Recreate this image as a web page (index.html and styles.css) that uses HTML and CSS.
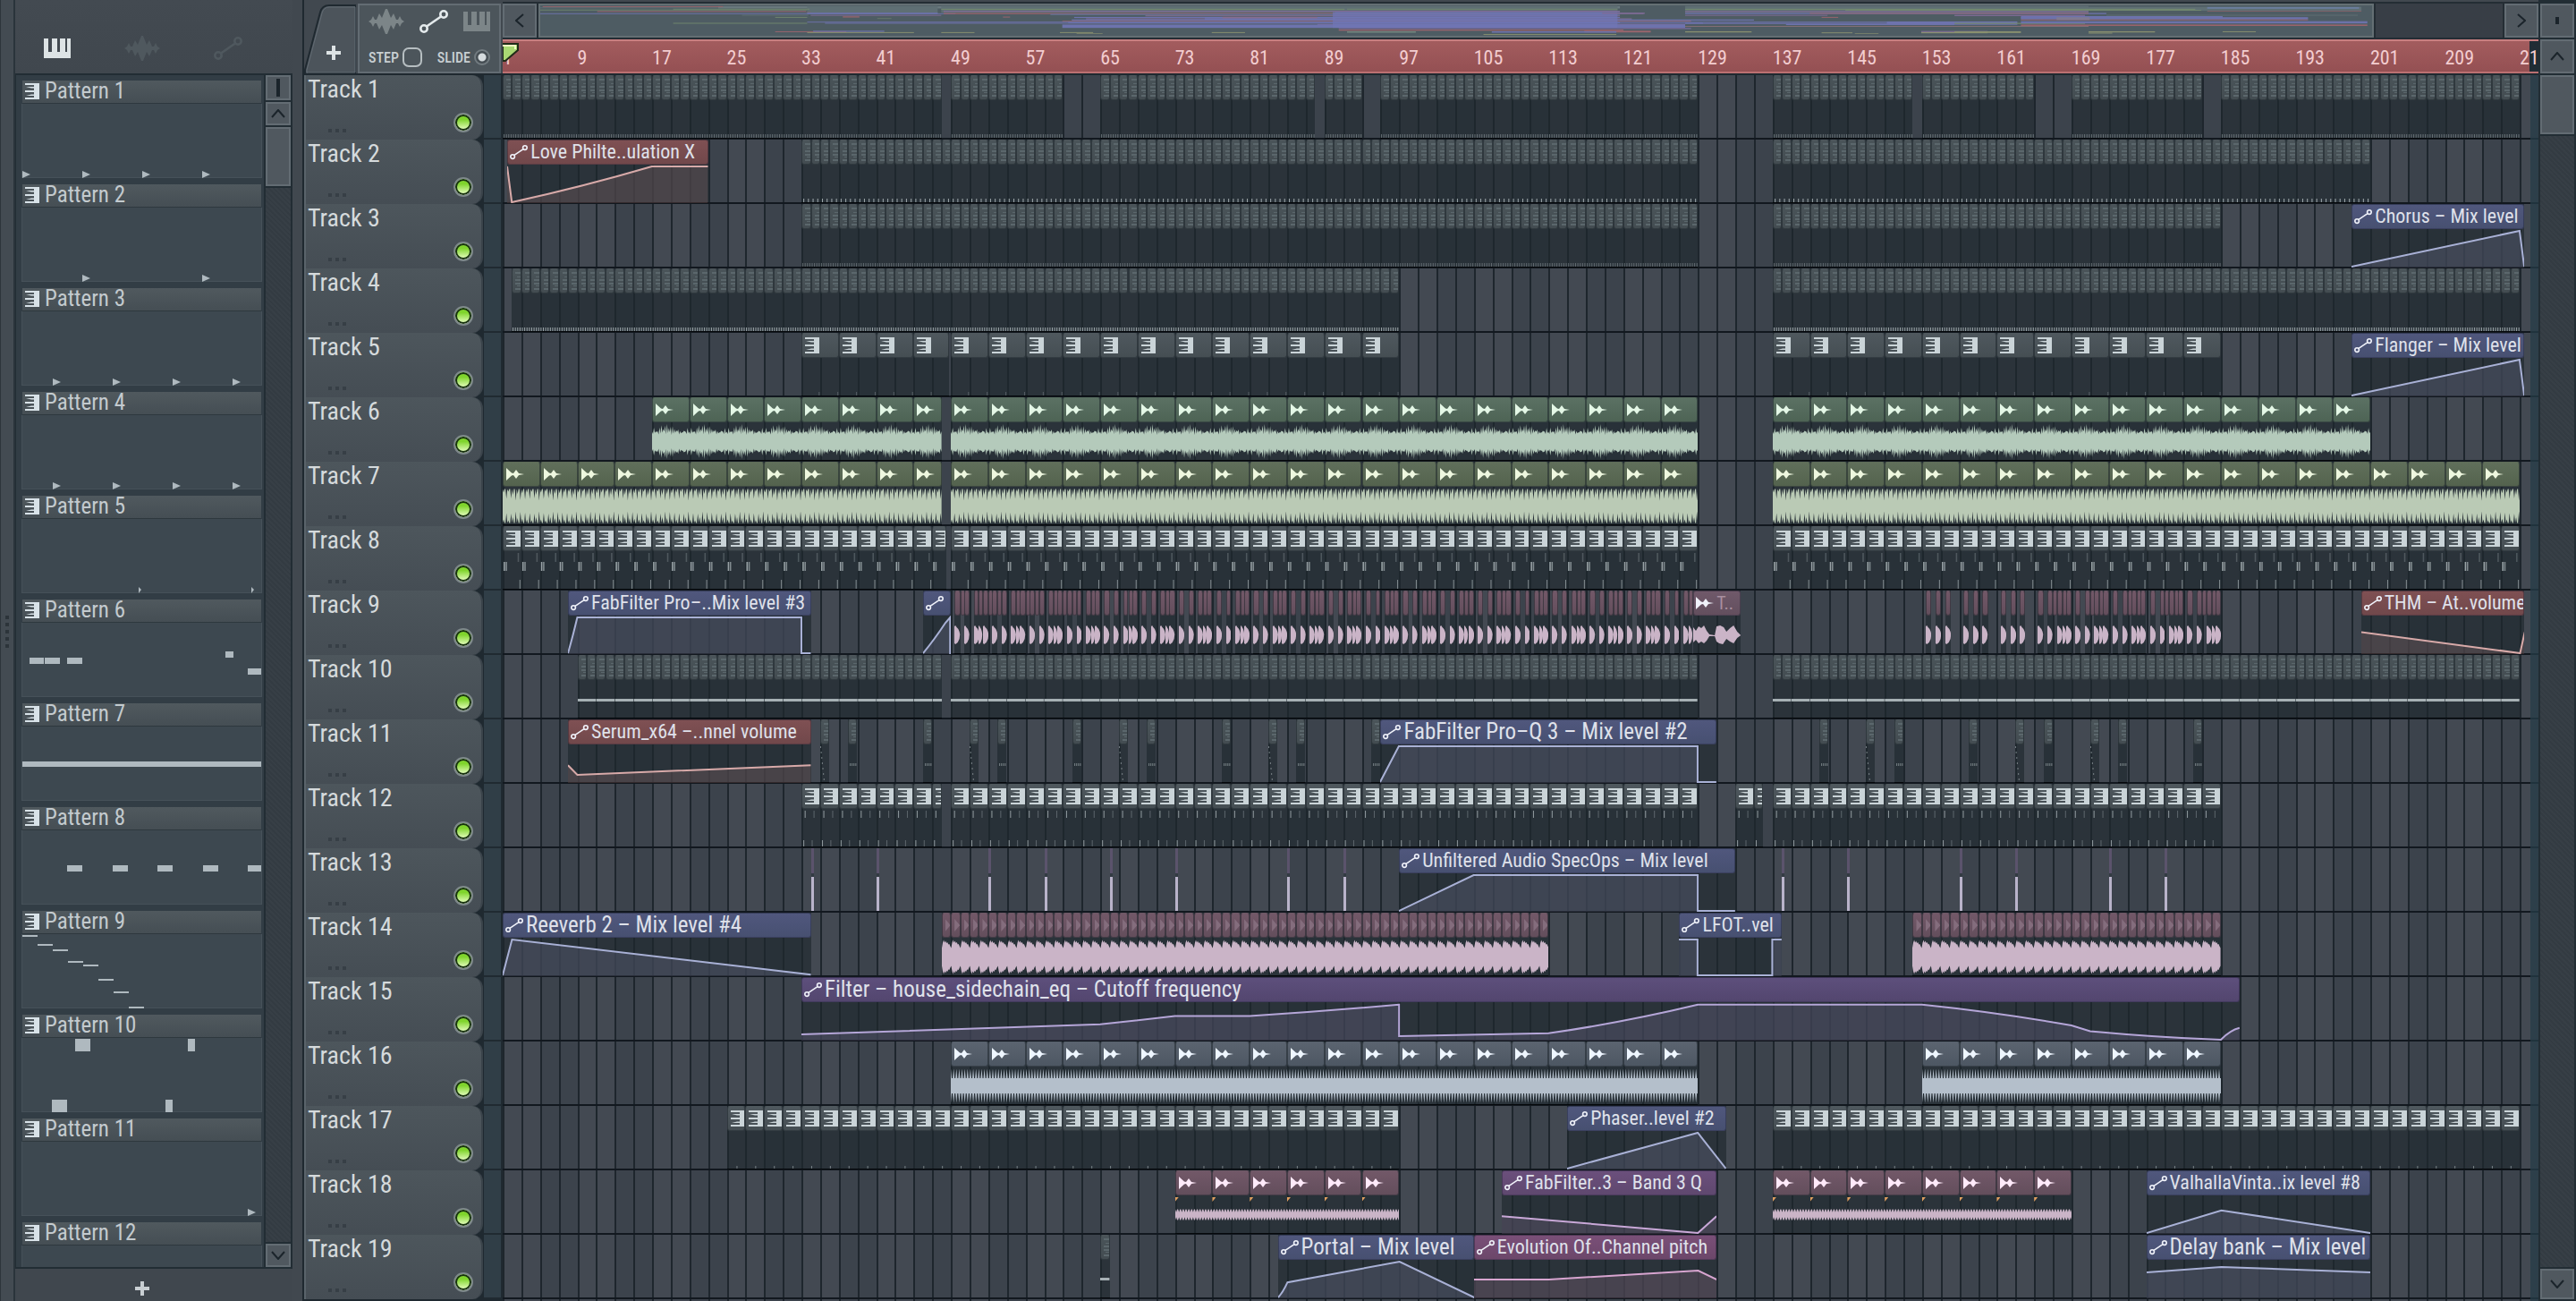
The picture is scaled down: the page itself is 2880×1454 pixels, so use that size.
FILE: index.html
```html
<!DOCTYPE html>
<html lang="en">
<head>
<meta charset="utf-8">
<title>Playlist</title>
<link rel="stylesheet" href="styles.css">
</head>
<body>
<svg class="defs" aria-hidden="true">
  <symbol id="piano" viewBox="0 0 30 22"><path d="M0 0h5v15h4V0h6v15h3V0h6v15h2V0h4v22H0z"/></symbol>
  <symbol id="wave" viewBox="0 0 40 28"><path d="M0 14l3-2 2-4 2 4 2 0 3-7 3 5 2-5 2-5h2l2 5 2 5 3-5 3 7 2 0 2-4 2 4 3 2-3 2-2 4-2-4-2 0-3 7-3-5-2 5-2 5h-2l-2-5-2-5-3 5-3-7-2 0-2 4-2-4z"/></symbol>
  <symbol id="link" viewBox="0 0 32 26"><g fill="none" stroke="currentColor" stroke-width="2.6"><circle cx="5" cy="21" r="3.7"/><circle cx="27" cy="5" r="3.7"/><path d="M8 18.500L24 7.500"/></g></symbol>
  <symbol id="keys" viewBox="0 0 16 18"><path d="M0 0h16v18H0v-2h10v-2H1l6-1.500h3V10H0V8h10V5.500H7L1 4h9V2H0z"/></symbol>
  <symbol id="dimkeys" viewBox="0 0 6 20"><path d="M0 0h6v2H0zM2 5h4v1H2zM0 8h6v2H0zM0 12h6v2H0zM2 15h4v1H2zM0 18h6v2H0z"/></symbol>
  <symbol id="sample" viewBox="0 0 20 14"><path d="M0 0l6 5.500 2 .5 3-4 3 4 6 1-6 1-3 4-3-4-2 .5L0 14z"/></symbol>
  <symbol id="plus" viewBox="0 0 16 16"><path d="M6 0h4v6h6v4h-6v6H6v-6H0V6h6z"/></symbol>
  <symbol id="chevron" viewBox="0 0 16 10"><path d="M1 9l7-8 7 8" fill="none" stroke="currentColor" stroke-width="2"/></symbol>
</svg>

<main class="app">
  <div class="handle"><i></i><i></i><i></i><i></i><i></i></div>

  <aside class="browser">
    <nav class="modes">
      <button class="mode on" aria-label="Patterns"><svg width="30" height="22"><use href="#piano"/></svg></button>
      <button class="mode" aria-label="Audio"><svg width="40" height="28"><use href="#wave"/></svg></button>
      <button class="mode" aria-label="Automation"><svg width="32" height="26"><use href="#link"/></svg></button>
    </nav>
    <div class="picker">
      <ul class="patterns" id="patterns"></ul>
      <div class="scroll narrow">
        <button class="btn" aria-label="Collapse"><span class="bar"></span></button>
        <button class="btn" aria-label="Scroll up"><svg width="16" height="10"><use href="#chevron"/></svg></button>
        <div class="thumb"></div>
        <div class="groove"></div>
        <button class="btn" aria-label="Scroll down"><svg class="down" width="16" height="10"><use href="#chevron"/></svg></button>
      </div>
    </div>
    <button class="add" aria-label="Add pattern"><svg width="16" height="16"><use href="#plus"/></svg></button>
  </aside>

  <section class="playlist">
    <div class="corner">
      <button class="tab" aria-label="Add track">
        <svg class="tab-shape" viewBox="0 0 58 80" preserveAspectRatio="none"><path d="M1 80V76L18 10Q20 2 28 2H58V80z" fill="#4c545b" stroke="#1f2930" stroke-width="2"/><path d="M3 80V76L20 11Q22 4 28 4H57V79H3" fill="none" stroke="#636c74" stroke-width="1"/></svg>
        <svg class="tab-plus" width="16" height="16"><use href="#plus"/></svg>
      </button>
      <div class="tools">
        <div class="tool-icons">
          <button class="mode" aria-label="Show audio"><svg width="40" height="28"><use href="#wave"/></svg></button>
          <button class="mode on" aria-label="Show automation"><svg width="32" height="26"><use href="#link"/></svg></button>
          <button class="mode" aria-label="Show patterns"><svg width="30" height="22"><use href="#piano"/></svg></button>
        </div>
        <div class="switches">
          <label>STEP<input type="checkbox" class="step"></label>
          <label>SLIDE<input type="radio" class="slide" checked></label>
        </div>
      </div>
    </div>

    <header class="top">
      <div class="overview">
        <button class="btn" aria-label="Scroll left"><svg class="left" width="16" height="10"><use href="#chevron"/></svg></button>
        <div class="map"><svg id="map" viewBox="0 0 1543 108" preserveAspectRatio="none"></svg></div>
        <div class="map-rest"></div>
        <button class="btn" aria-label="Scroll right"><svg class="right" width="16" height="10"><use href="#chevron"/></svg></button>
      </div>
      <div class="ruler" id="ruler">
        <svg class="playhead" width="19" height="24" viewBox="0 0 19 24"><path d="M0 2h17v7L3 21H0z" fill="#a9d873" stroke="#1f2c18" stroke-width="2"/><path d="M0 4h14v4" fill="none" stroke="#efffc4" stroke-width="2"/></svg>
      </div>
    </header>

    <div class="scroll wide">
      <button class="btn" aria-label="Detach"><span class="dot"></span></button>
      <button class="btn" aria-label="Scroll up"><svg width="16" height="10"><use href="#chevron"/></svg></button>
      <div class="thumb"></div>
      <div class="groove"></div>
      <button class="btn" aria-label="Scroll down"><svg class="down" width="16" height="10"><use href="#chevron"/></svg></button>
    </div>

    <ol class="heads" id="heads"></ol>
    <div class="lanes" id="lanes"></div>
  </section>
</main>
<script src="playlist.js"></script>
</body>
</html>
```
FILE: styles.css
```css
* { box-sizing: border-box; }
html, body { height: 100%; margin: 0; }
body {
  background: #41484f;
  color: #d3d9dc;
  font-family: "Roboto Condensed", "Liberation Sans Narrow", Roboto, sans-serif;
  overflow: hidden;
}
button { appearance: none; border: 0; padding: 0; margin: 0; background: none; color: inherit; font: inherit; }
ul, ol { list-style: none; margin: 0; padding: 0; }
svg { display: block; fill: currentColor; }
.defs { position: absolute; width: 0; height: 0; }
.app { display: flex; height: 100vh; }

/* left edge grip */
.handle {
  width: 17px; flex: none; display: flex; flex-direction: column; align-items: center; justify-content: center; gap: 4px;
  background: #434b52; border-left: 1px solid #2d353b; border-right: 2px solid #2a343b; padding-bottom: 42px;
}
.handle i { width: 4px; height: 4px; background: #2c343a; }

/* pattern browser */
.browser { width: 310px; flex: none; display: flex; flex-direction: column; background: linear-gradient(#434a51, #40474e 82px); }
.modes { height: 82px; display: flex; align-items: center; gap: 60px; padding: 26px 0 0 32px; }
.mode { color: #4f585e; }
.mode.on { color: #dde3e5; }
.picker { flex: 1; min-height: 0; display: flex; border: 2px solid #222d34; border-left-width: 1px; background: #222d34; gap: 2px; }
.patterns { flex: 1; overflow: hidden; background: #323d45; padding: 6px 2px 0 6px; }
.pattern { margin-bottom: 7px; }
.pattern-name {
  display: flex; align-items: center; gap: 6px; height: 26px; margin: 0 1px; padding: 0 0 1px 3px;
  font-size: 25px; font-weight: 400; line-height: 24px; color: #c3cace;
  background: linear-gradient(#50595e, #454e54); border-bottom: 1px solid #2e383e;
}
.pattern-name svg { color: #d8e2e8; }
.preview { height: 83px; background: #3d4850; border: 1px solid #465159; border-top: 0; color: #afb9bf; }

.btn { display: flex; align-items: center; justify-content: center; background: #50585f; border: 2px solid #636c73; color: #1b242b; flex: none; }
.scroll { display: flex; flex-direction: column; gap: 2px; background: #222d34; }
.thumb { height: 66px; background: #50585f; border: 2px solid #636c73; }
.groove { flex: 1; background: repeating-linear-gradient(45deg, #373f46 0 2px, #333b42 2px 4px); }
.narrow { width: 28px; }
.narrow .btn { height: 26px; }
.narrow .btn:first-child { height: 28px; }
.bar { width: 4px; height: 20px; background: #1b242b; }
.dot { width: 4px; height: 8px; background: #1b242b; }
.down { transform: rotate(180deg); }
.left { transform: rotate(-90deg); }
.right { transform: rotate(90deg); }
.add { height: 36px; display: flex; align-items: center; justify-content: center; color: #c9cfd3; padding: 8px 26px 0 0; }

/* playlist frame */
.playlist {
  flex: 1; min-width: 0; display: grid; grid-template: 84px minmax(0, 1fr) / 222px minmax(0, 1fr) 42px;
  padding-left: 13px; background: linear-gradient(90deg, #41484f 0 11px, #1f2930 11px 13px, #1f2930 13px);
}
.corner { display: flex; padding: 4px 2px 2px 0; gap: 2px; background: linear-gradient(#41484f 0 82px, #1f2930 82px); }
.tab { position: relative; width: 58px; }
.tab-shape { width: 100%; height: 100%; }
.tab-plus { position: absolute; left: 25px; top: 47px; color: #dde3e5; }
.tools { flex: 1; background: #4c555b; border: 2px solid #636c73; padding: 2px 10px 0; }
.tool-icons { display: flex; align-items: center; justify-content: space-between; height: 32px; }
.tools .mode { color: #7c8588; }
.tools .mode.on { color: #e4eaec; }
.switches { display: flex; justify-content: space-between; align-items: center; height: 42px; padding-top: 6px; font-size: 16px; font-weight: 500; color: #c8cfd2; }
.switches label { display: flex; align-items: center; gap: 4px; }
.switches input { appearance: none; margin: 0; }
.step { width: 22px; height: 22px; border: 2px solid #b6bec1; border-radius: 7px; }
.slide { width: 18px; height: 18px; border: 2px solid #727b80; border-radius: 50%; background: radial-gradient(circle, #d5dbde 0 4px, #454d53 5px); }

.top { display: flex; flex-direction: column; background: #1f2930; min-width: 0; container-type: inline-size; --bar: calc(100cqw / 218); }
.overview { display: flex; height: 44px; padding: 4px 0 2px; gap: 2px; background: linear-gradient(#41484f 0 2px, #242d34 2px 4px, #242d34 4px); }
.overview .btn { width: 38px; }
.map { flex: 935; background: #4e5c63; border: 2px solid #646f73; padding: 0 1px 0 0; }
.map svg { width: 100%; height: 34px; }
.map-rest { flex: 65; background: #383e46; }
.ruler {
  position: relative; display: flex; height: 38px; overflow: hidden; align-items: center;
  background: linear-gradient(#a35c5e, #945053); border-top: 2px solid #c87f80; border-bottom: 2px solid #bb7072;
  color: #f3cdd0; font-size: 22px; line-height: 36px; padding-top: 3px;
}
.ruler span { flex: none; width: calc(var(--bar) * 8); z-index: 1; }
.ruler::after { content: ""; position: absolute; right: 0; top: -2px; bottom: -2px; width: var(--bar); background: #202c34; }
.playhead { position: absolute; left: 0; top: 1px; z-index: 2; }

.wide { grid-row: 1 / 3; grid-column: 3; padding: 4px 2px 2px; }
.wide .btn { height: 38px; }
.wide .btn:last-child { height: 34px; }

/* track headers */
.heads { grid-row: 2; overflow: hidden; }
.head {
  display: grid; grid-template-columns: 200px 19px; column-gap: 1px; height: 72px;
}
.head::after { content: ""; background: #303e47; border-bottom: 2px solid #202a31; }
.head-box {
  display: flex; flex-direction: column; justify-content: space-between; position: relative;
  padding: 1px 0 8px 2px; border-radius: 0 12px 12px 0; border-left: 2px solid #59636a; border-right: 2px solid #3a434a;
  background: linear-gradient(#4d565c, #454d54);
}
.head-name { font-size: 28px; line-height: 30px; font-weight: 400; color: #d5dadc; }
.dots { display: flex; gap: 4px; padding-left: 23px; }
.dots i { width: 4px; height: 4px; background: #373f46; }
.led {
  position: absolute; right: 9px; bottom: 8px; width: 22px; height: 22px; border-radius: 50%;
  border: 2px solid #7e888b; background: linear-gradient(#7fd42c 30%, #d9f8ac 85%);
  box-shadow: inset 0 0 0 2px #17300f;
}

/* lanes: every clip is placed in bars, one bar is 1/218 of the lane */
.lanes { grid-row: 2; position: relative; overflow: hidden; container-type: inline-size; }
.lane {
  --bar: calc(100cqw / 218);
  position: relative; height: 72px;
  background:
    linear-gradient(transparent 70px, #12181f 70px),
    repeating-linear-gradient(90deg, #1e262d 0 2px, transparent 2px calc(var(--bar) * 2)),
    repeating-linear-gradient(90deg, #434952 0 calc(var(--bar) * 4), #3c434c 0 calc(var(--bar) * 8));
}
.song-end { position: absolute; z-index: 3; inset: 0 0 0 auto; width: 9px; background: rgba(38, 60, 72, .75); }
.clip, .run, .tile {
  position: absolute; top: 0;
  left: calc((var(--s) - 1) * var(--bar)); width: calc(var(--n) * var(--bar));
}
.clip, .run { height: 71px; background: rgba(31, 40, 45, .66); border-bottom: 1px solid #05080b; }
.clip { z-index: 2; }
.clip-name {
  display: flex; align-items: center; gap: 3px; height: 28px; padding-left: 2px; overflow: hidden; white-space: nowrap;
  font-size: 22px; line-height: 26px; color: #dfe1ea; border-radius: 3px;
  background: linear-gradient(var(--a), var(--b)); border: 1px solid rgba(20, 24, 40, .35);
}
.roomy .clip-name { font-size: 25px; }
.clip-name svg { flex: none; width: 20px; height: 18px; color: #f0f2fa; }
.clip-name span { flex: none; }
.clip .curve { position: absolute; left: 0; top: 28px; width: 100%; height: 43px; }
.curve path { vector-effect: non-scaling-stroke; }
.curve .line { fill: none; stroke: var(--l); stroke-width: 2; }
.curve .fill { fill: var(--f); }
.blue { --a: #50577d; --b: #475071; --l: #a9b1d6; --f: rgba(92, 98, 122, .42); }
.red { --a: #7f5053; --b: #71484b; --l: #d8aaa9; --f: rgba(120, 95, 98, .4); }
.purple { --a: #5d4f7c; --b: #53466f; --l: #b5a6d8; --f: rgba(95, 92, 122, .42); }
.violet { --a: #6b4f7c; --b: #5f486f; --l: #c9a8d8; --f: rgba(105, 92, 118, .42); }
.magenta { --a: #7a4f78; --b: #6c476a; --l: #d8a5d0; --f: rgba(115, 92, 112, .42); }
.pink { --a: #70596a; --b: #634f5e; --l: #cab4c7; }

.tile {
  height: 28px; overflow: hidden; border-radius: 3px; padding: 4px 0 0 3px;
  background: linear-gradient(var(--a), var(--b)); border: 1px solid rgba(24, 32, 38, .5); border-top-color: rgba(255, 255, 255, .06);
}
.keys { --a: #4f585e; --b: #454e53; --i: #cad4d8; }
.dim { --a: #4a5459; --b: #434c51; --i: #5b676c; }
.dim .tile { padding: 3px 0 0 3px; }
.green { --a: #5b7163; --b: #4e6455; --i: #e4f7e6; --l: #b4cabb; }
.olive { --a: #606f5b; --b: #54634e; --i: #eef7df; --l: #bacab5; }
.rose { --a: #725868; --b: #634e5c; --i: #ffeafa; --l: #cab4c7; }
.steel { --a: #5b6470; --b: #4d5763; --i: #eef6ff; --l: #b4bfcb; }
.green .tile, .olive .tile, .rose .tile, .steel .tile { padding-top: 6px; }
.tile svg { color: var(--i); }
.wavebox { position: absolute; left: 0; top: 29px; width: 100%; height: 41px; color: var(--l); }
.ticks { position: absolute; left: 0; top: 0; width: 100%; height: 70px; color: #a6b0b4; }
.flag { position: absolute; top: 30px; left: calc((var(--s) - 1) * var(--bar)); width: 4px; height: 5px; background: #e0a060; clip-path: polygon(0 0, 100% 0, 0 100%); }
.faint { font-size: 20px; color: #a88f9f; }
.fade { position: absolute; left: 3px; top: 6px; width: 6px; height: 14px; background: #846d7d; clip-path: polygon(0 0, 100% 50%, 0 100%); }
.hit { position: absolute; top: 0; left: calc((var(--s) - 1) * var(--bar)); width: 3px; height: 70px; background: linear-gradient(#5b536c 28px, #333b43 28px 32px, #b9b3ca 32px); }
```
FILE: playlist.js
```js
const use = (id, w, h) => `<svg width="${w}" height="${h}"><use href="#${id}"/></svg>`;
const place = (s, n) => `style="--s:${s};--n:${n}"`;

/* ---- pattern browser ---- */
const tri = x => `<path d="M${x} 75l9 4-9 4z"/>`;
const box = (x, y, w, h) => `<rect x="${x}" y="${y}" width="${w}" height="${h}"/>`;
const previews = [
  [0, 67, 134, 201].map(tri).join(''),
  [67, 201].map(tri).join(''),
  [34, 101, 168, 235].map(tri).join(''),
  [34, 101, 168, 235].map(tri).join(''),
  [130, 256].map(x => `<path d="M${x} 76l3 3-3 4z"/>`).join(''),
  box(8, 39, 16, 7) + box(25, 39, 17, 7) + box(50, 39, 17, 7) + box(227, 32, 9, 7) + box(252, 51, 17, 7),
  box(0, 39, 269, 6),
  [50, 101, 151, 202, 252].map(x => box(x, 39, 17, 7)).join(''),
  [1, 11, 17, 30, 34, 50, 64, 81].map((y, i) => box(i * 17, y, 17, 2)).join(''),
  box(59, 1, 17, 14) + box(185, 1, 8, 14) + box(33, 69, 17, 14) + box(160, 69, 8, 14),
  tri(252),
  ''
];
document.getElementById('patterns').innerHTML = previews.map((p, i) =>
  `<li class="pattern"><h3 class="pattern-name">${use('keys', 16, 18)}Pattern ${i + 1}</h3><div class="preview"><svg width="100%" height="83">${p}</svg></div></li>`).join('');

/* ---- ruler ---- */
let marks = '';
for (let b = 1; b <= 217; b += 8) marks += `<span>${b}</span>`;
document.getElementById('ruler').insertAdjacentHTML('beforeend', marks);

/* ---- overview map: x, y, width, height, colour ---- */
const G = '#69787d', g = '#71876f', P = '#6d73ad', R = '#9b656d', M = '#7f6b96', Y = '#89906f';
let map = '';
const m = (x, y, w, h, c) => { map += `<rect x="${x}" y="${y}" width="${w}" height="${h}" fill="${c}"/>`; };
[[150, 3, 760, 8, G], [225, 2, 110, 28, '#5f6f74'], [338, 2, 570, 24, '#5f6f74'], [965, 2, 340, 26, '#5f6f74'], [1305, 5, 230, 14, '#5f6f74'],
 [2, 3, 152, 3, R], [0, 8, 150, 2, G], [0, 15, 225, 3, g], [112, 12, 115, 3, g], [338, 12, 340, 4, g], [680, 12, 228, 3, g], [965, 12, 430, 4, g], [1100, 16, 300, 3, g],
 [48, 20, 176, 2, R], [48, 22, 180, 2, '#81646f'], [0, 28, 350, 3, P], [225, 26, 110, 5, P], [340, 19, 570, 4, M], [340, 27, 460, 4, R], [800, 27, 130, 4, M], [670, 23, 240, 5, '#6b6f9c'],
 [170, 34, 56, 2, G], [228, 34, 110, 3, M], [430, 30, 480, 4, '#66749a'], [510, 35, 400, 4, '#7b6b8c'], [450, 41, 460, 4, P], [460, 46, 460, 4, M], [575, 41, 80, 5, R],
 [198, 41, 27, 3, g], [255, 39, 14, 4, R], [284, 46, 12, 2, g], [390, 40, 6, 3, R],
 [448, 50, 575, 4, P], [440, 55, 530, 3, R], [445, 58, 465, 5, P], [225, 58, 755, 3, P], [112, 62, 113, 3, g], [240, 62, 740, 3, P], [655, 66, 310, 4, '#7b6b9c'], [440, 68, 525, 12, P],
 [668, 24, 240, 56, 'rgba(112,118,182,.75)'], [560, 42, 110, 10, 'rgba(112,118,182,.6)'], [673, 80, 297, 4, '#77699c'], [673, 86, 240, 4, R], [880, 90, 56, 6, R],
 [895, 26, 36, 4, M], [965, 20, 340, 4, M], [965, 27, 355, 4, P], [1070, 27, 235, 3, R], [965, 34, 120, 3, M], [980, 58, 240, 3, P], [965, 62, 225, 4, P], [1050, 66, 142, 4, P], [965, 73, 340, 3, '#877077'],
 [1080, 41, 14, 3, R], [1135, 57, 110, 12, P], [1192, 34, 110, 4, M], [1192, 62, 110, 4, g], [1248, 38, 170, 8, P], [1248, 42, 242, 8, P], [1248, 50, 242, 3, R], [1248, 56, 292, 4, P], [1248, 60, 292, 4, P], [1248, 68, 292, 5, R], [1278, 42, 28, 10, '#7f7a91'],
 [1405, 6, 128, 6, '#6b7fa0'], [1405, 20, 130, 2, R], [1320, 34, 212, 2, G],
 [198, 92, 60, 3, R], [230, 90, 60, 4, P], [225, 95, 90, 3, Y], [338, 95, 28, 3, Y], [438, 95, 28, 3, Y], [452, 99, 22, 2, Y], [566, 95, 28, 3, Y], [680, 92, 58, 5, '#70857d'], [795, 102, 112, 3, Y], [802, 92, 105, 5, P],
 [965, 92, 56, 4, Y], [1080, 96, 26, 3, Y], [1108, 99, 20, 2, Y], [1164, 91, 56, 4, M], [1164, 95, 56, 4, Y], [1192, 92, 56, 6, Y], [1305, 92, 56, 4, Y], [1305, 97, 20, 3, Y], [1418, 92, 28, 3, Y]
].forEach(a => m(...a));
document.getElementById('map').innerHTML = map;

/* ---- lanes ---- */
const H = 43;
function curve(n, d) {
  // d: list of [bar, level] points, a third entry bends the segment that leads to the point
  const px = b => b * 10, py = v => 2 + (1 - v) * 40;
  let s = '', prev;
  d.forEach(([b, v, bend], i) => {
    if (!i) s = `M${px(b)} ${py(v)}`;
    else if (bend) s += `Q${(px(prev[0]) + px(b)) / 2} ${(py(prev[1]) + py(v)) / 2 + bend} ${px(b)} ${py(v)}`;
    else s += `L${px(b)} ${py(v)}`;
    prev = [b, v];
  });
  return `<svg class="curve" viewBox="0 0 ${n * 10} ${H}" preserveAspectRatio="none"><path class="fill" d="${s}L${n * 10} ${H}L0 ${H}z"/><path class="line" d="${s}"/></svg>`;
}
const clip = (s, e, cls, name, d) =>
  `<div class="clip ${cls}" ${place(s, e - s)}><div class="clip-name">${use('link', 20, 18)}<span>${name}</span></div>${curve(e - s, d)}</div>`;

const rnd = seed => () => (seed = (seed * 16807) % 2147483647) / 2147483647;
// amplitude functions: position inside the loop (0..1), random source, step index; returns 0..1
const shapes = {
  green: { per: 4, amp: (t, r, i) => { const v = r(); return i % 2 ? .38 + .2 * v : .5 + .25 * Math.exp(-Math.pow((t - .42) * 5, 2)) + .3 * v * (i % 3 ? 1 : .3); } },
  olive: { per: 4, amp: (t, r, i) => i % 5 === 4 ? .3 + r() * .15 : i % 5 === 1 ? .6 + .2 * r() : .95 },
  rose14: { per: 1, amp: (t, r) => [.5, .8, .95, .8, .9, .78, .82, .7, .72, .6][Math.round(t * 10)] || .5 },
  steel: { per: 3, amp: (t, r, i) => i % 3 ? .42 : .95 },
  rose18: { per: 3, amp: (t, r, i) => i % 3 === 1 ? .14 : .3 }
};
function wave(n, kind, seed) {
  const k = shapes[kind], up = [], dn = [], per = k.per * 10;
  for (let x = 0; x <= n * 10; x++) {
    const i = Math.round(x % per), r = rnd(seed + i * 7919 + 13);
    r(); r();
    const a = Math.min(.97, k.amp(i / per, r, i));
    up.push(`${x} ${(20.5 - a * 20).toFixed(1)}`); dn.unshift(`${x} ${(20.5 + a * 20).toFixed(1)}`);
  }
  return `<svg class="wavebox" viewBox="0 0 ${n * 10} 41" preserveAspectRatio="none"><path d="M${up.join('L')}L${dn.join('L')}z"/></svg>`;
}
// ticks: per = loop length in bars, list of [offset, y, height, opacity, width]
function ticks(n, per, list) {
  let s = '';
  for (let b = 0; b < n; b += per) for (const [o, y, h, op, w = 1.5] of list)
    if (b + o < n) s += `<rect x="${((b + o) * 10).toFixed(1)}" y="${y}" width="${w}" height="${h}" opacity="${op}"/>`;
  return `<svg class="ticks" viewBox="0 0 ${n * 10} 70" preserveAspectRatio="none">${s}</svg>`;
}
const icons = { keys: use('keys', 16, 18), dim: use('dimkeys', 6, 20), sample: use('sample', 20, 14), fade: '<i class="fade"></i>' };
function run(s, e, size, cls, icon, extra) {
  const n = e - s;
  let t = '';
  for (let b = 0; b < n; b += size) t += `<div class="tile" ${place(b + 1, Math.min(size, n - b))}>${icons[icon] || ''}</div>`;
  return `<div class="run ${cls}" ${place(s, n)}>${t}${extra ? extra(n) : ''}</div>`;
}
const runs = (segs, ...a) => segs.map(([s, e]) => run(s, e, ...a)).join('');

function chops(s, offs) {
  return offs.map(([o, w]) => run(s + o, s + o + w, w, 'rose', '', n =>
    `<svg class="wavebox" viewBox="0 0 10 41" preserveAspectRatio="none"><path d="M0 11L2 10 4 12 7 14 9 17 10 20 9 25 6 29 4 30 2 31 0 30z"/></svg>`)).join('');
}
const full = [[.4, .6], [1.45, .55], [2.43, .57], [3, .4], [3.4, .6]];
const part = [[.4, .6], [1.45, .6], [2.45, .6]];
let vocals = '';
for (let b = 49; b < 125; b += 4) vocals += chops(b, full);
vocals += chops(125, full.slice(0, 4));
for (const b of [153, 157, 161]) vocals += chops(b, part);
for (let b = 165; b < 185; b += 4) vocals += chops(b, full);
const vocalEnd = `<div class="clip pink" ${place(128.5, 5.1)}><div class="clip-name">${use('sample', 20, 14)}<span class="faint">T..</span></div>
  <svg class="wavebox" viewBox="0 0 53 41" preserveAspectRatio="none"><path d="M0 12L3 16 6 11 9 13 12 10 15 16 18 20 24 21 26 11 30 10 34 12 37 17 41 13 45 10 49 17 53 21 49 24 45 30 41 28 37 25 33 31 29 30 26 28 24 22 18 22 15 27 12 30 9 28 6 30 3 26 0 29z"/></svg></div>`;

const dimTile = (segs, t) => runs(segs, 1, 'dim', 'dim', t);
const quarter = op => n => ticks(n, .5, [[.1, 66, 4, op, 1], [.35, 66, 4, op, 1]]);
const small = list => list.map(b => run(b, b + .95, 1, 'dim', 'dim', n => ticks(n, 1, [.2, .4, .6, .8].map(o => [o, 49, 3, .6, 1])))).join('');
const steps = list => list.map(b => run(b, b + .95, 1, 'dim', 'dim', n => ticks(n, 1, [0, 1, 2, 3, 4, 5, 6].map(i => [i * .06, 30 + i * 6, 2, .6, 1])))).join('');
const flags = n => { let s = ''; for (let b = 0; b < n; b += 4) s += `<i class="flag" style="--s:${b + 1}"></i>`; return s; };
const rise = [[0, 0], [18, 1], [18.5, 0]];

const tracks = [
  dimTile([[1, 48], [49, 61], [65, 88], [89, 93], [95, 129], [137, 152], [153, 165], [169, 183], [185, 217]], quarter(.5)),
  clip(1.5, 23, 'red', 'Love Philte..ulation X', [[0, 1], [.5, 0], [15.5, 1, 3], [21.5, 1]]) + dimTile([[33, 129], [137, 201]], n => ticks(n, .5, [[.2, 66, 4, .9, 1]])),
  dimTile([[33, 129], [137, 185]], quarter(.45)) + clip(199, 217.5, 'blue', 'Chorus – Mix level', rise),
  dimTile([[2, 97], [137, 217]], quarter(.9)),
  runs([[33, 48.8], [49, 97], [137, 185]], 4, 'keys', 'keys', n => ticks(n, 2, [[1.85, 66, 4, .35, 1]])) + clip(199, 217.5, 'blue', 'Flanger – Mix level', rise),
  runs([[17, 48], [49, 129], [137, 201]], 4, 'green', 'sample', n => wave(n, 'green', 5)),
  runs([[1, 48], [49, 129], [137, 217]], 4, 'olive', 'sample', n => wave(n, 'olive', 11)),
  runs([[1, 48.5], [49, 129], [137, 217]], 2, 'keys', 'keys', n => ticks(n, 2, [[.1, 40, 10, .9], [.32, 40, 10, .7], [1.6, 30, 10, .3], [1.8, 60, 10, .7, 1]])),
  clip(8, 34, 'blue', 'FabFilter Pro–..Mix level #3', [[0, 0], [1, 1, 2], [25, 1], [25, 0], [26, 0]]) +
    clip(46, 49, 'blue', '', [[0, 0], [2.4, .85, 2], [2.9, 1], [2.9, 0], [3, 0]]) + vocals + vocalEnd +
    clip(200, 217.5, 'red', 'THM – At..volume', [[0, .59], [17, 0], [17.5, .59]]),
  dimTile([[9, 48], [49, 129], [137, 217]], n => ticks(n, 2, [[0, 49, 3, 1, 19.5]])),
  clip(8, 34, 'red', 'Serum_x64 –..nnel volume', [[0, .47], [1, .2], [26, .47]]) +
    steps([35, 51, 67, 83, 147, 163, 171]) + small([38, 46, 54, 62, 70, 78, 86, 94, 142, 150, 158, 166, 174, 182]) +
    clip(95, 131, 'blue roomy', 'FabFilter Pro–Q 3 – Mix level #2', [[0, 0], [2, 1], [34, 1], [34, 0], [36, 0]]),
  runs([[33, 48], [49, 129], [133, 136], [137, 185]], 2, 'keys', 'keys', n => ticks(n, 2, [[.35, 30, 8, .8, 1], [1.3, 30, 8, .4, 1], [.2, 63, 7, .8, 1], [1.1, 63, 7, .4, 1]])),
  [34, 41, 53, 59, 66, 73, 85, 91, 138, 145, 157, 163, 173, 179].map(b => `<i class="hit" style="--s:${b}"></i>`).join('') +
    clip(97, 133, 'blue', 'Unfiltered Audio SpecOps – Mix level', [[0, 0], [8, 1], [32, 1], [32, 0], [36, 0]]),
  clip(1, 34, 'blue roomy', 'Reeverb 2 – Mix level #4', [[0, 0], [1, 1], [33, .02]]) +
    runs([[48, 113], [152, 185]], 1, 'rose', 'fade', n => wave(n, 'rose14', 3)) +
    clip(127, 138, 'blue', 'LFOT..vel', [[0, 1], [2, 1], [2, 0], [10, 0], [10, 1], [11, 1]]),
  clip(33, 187, 'purple roomy', 'Filter – house_sidechain_eq – Cutoff frequency',
    [[0, .15], [32, .43], [40, .66], [48, .66], [64, .98, 1], [64, .1], [80, .18], [96, .98, 4], [120, .98], [136, .4, -3], [138, .24], [152, 0, 2], [154, .33, -4]]),
  runs([[49, 129], [153, 185]], 4, 'steel', 'sample', n => wave(n, 'steel', 2)),
  runs([[25, 97], [137, 217]], 2, 'keys', 'keys', n => ticks(n, 2, [[1, 67, 3, .6, 1]])) + clip(115, 132, 'blue', 'Phaser..level #2', [[0, 0], [14, 1], [17, 0]]),
  runs([[73, 97], [137, 169]], 4, 'rose', 'sample', n => wave(n, 'rose18', 2) + flags(n)) +
    clip(108, 131, 'violet', 'FabFilter..3 – Band 3 Q', [[0, .47], [21, 0], [23, .47]]) +
    clip(177, 201, 'blue', 'ValhallaVinta..ix level #8', [[0, 0], [8, .63], [24, 0]]),
  run(65, 66, 1, 'dim', 'dim', n => ticks(n, 1, [[0, 48, 3, 1, 10]])) +
    clip(84, 105, 'blue roomy', 'Portal – Mix level', [[0, 0], [1, .42, 3], [13, 1], [21, 0]]) +
    clip(105, 131, 'magenta', 'Evolution Of..Channel pitch', [[0, .5], [8, .5], [24, .75], [26, .5]]) +
    clip(177, 201, 'blue roomy', 'Delay bank – Mix level', [[0, .7], [8, .85], [24, .7]])
];
document.getElementById('lanes').innerHTML =
  tracks.map(t => `<div class="lane">${t}</div>`).join('') + '<div class="lane"></div><div class="song-end"></div>';
document.getElementById('heads').innerHTML = tracks.map((t, i) =>
  `<li class="head"><div class="head-box"><span class="head-name">Track ${i + 1}</span><span class="dots"><i></i><i></i><i></i></span><button class="led" aria-label="Mute track ${i + 1}"></button></div></li>`).join('');
```
